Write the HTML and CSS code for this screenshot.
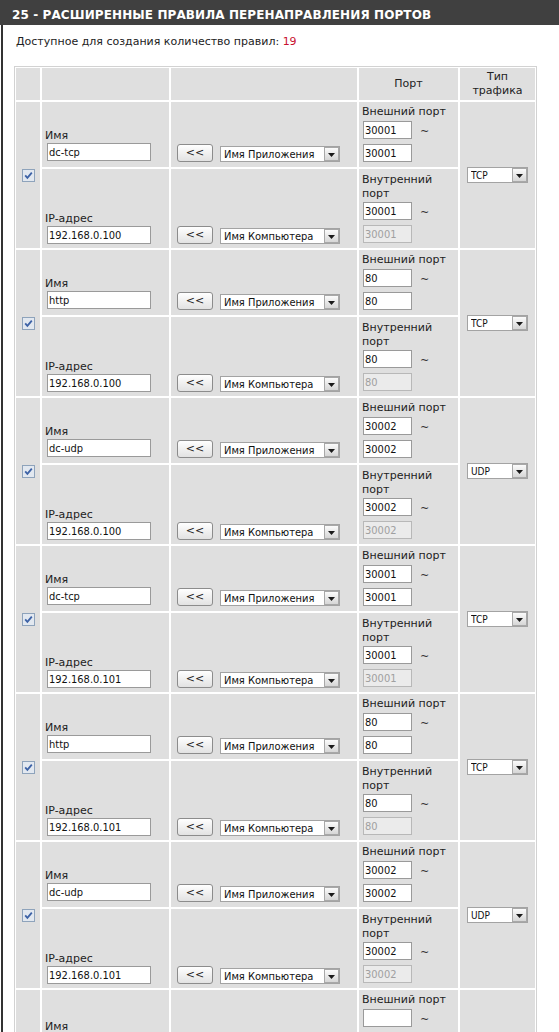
FILE: index.html
```html
<!DOCTYPE html>
<html lang="ru">
<head>
<meta charset="utf-8">
<title>Расширенные правила перенаправления портов</title>
<link rel="stylesheet" href="styles.css">
</head>
<body>
<div class="title">25 - РАСШИРЕННЫЕ ПРАВИЛА ПЕРЕНАПРАВЛЕНИЯ ПОРТОВ</div>
<div class="box">
  <div class="avail">Доступное для создания количество правил: <span class="num">19</span></div>
  <div class="grid">
    <div class="cell"></div>
    <div class="cell"></div>
    <div class="cell"></div>
    <div class="cell hdr">Порт</div>
    <div class="cell hdr">Тип<br>трафика</div>

    <!-- group 1 -->
    <div class="cell chk"><svg class="cb" width="13" height="13" viewBox="0 0 13 13"><rect x="0.5" y="0.5" width="12" height="12" fill="#e2e8f0" stroke="#8ea3bb"/><path d="M3.2 6.3 L5.4 8.8 L9.8 3.6" fill="none" stroke="#3d62a6" stroke-width="1.8"/></svg></div>
    <div class="cell name r1"><span class="lbl">Имя</span><input class="txt nm" type="text" value="dc-tcp"></div>
    <div class="cell act r1"><button class="btn">&lt;&lt;</button><div class="sel wide"><span class="st">Имя Приложения</span><span class="arr"><svg width="7" height="4" viewBox="0 0 7 4"><path d="M0 0H7L3.5 4Z" fill="#1a1a1a"/></svg></span></div></div>
    <div class="cell port r1"><div class="plbl">Внешний порт</div><div class="prow"><input class="txt pn" type="text" value="30001"><span class="tilde">~</span></div><div class="prow"><input class="txt pn" type="text" value="30001"></div></div>
    <div class="cell type"><div class="sel narrow"><span class="st">TCP</span><span class="arr"><svg width="7" height="4" viewBox="0 0 7 4"><path d="M0 0H7L3.5 4Z" fill="#1a1a1a"/></svg></span></div></div>
    <div class="cell name r2"><span class="lbl">IP-адрес</span><input class="txt nm" type="text" value="192.168.0.100"></div>
    <div class="cell act r2"><button class="btn">&lt;&lt;</button><div class="sel wide"><span class="st">Имя Компьютера</span><span class="arr"><svg width="7" height="4" viewBox="0 0 7 4"><path d="M0 0H7L3.5 4Z" fill="#1a1a1a"/></svg></span></div></div>
    <div class="cell port r2"><div class="plbl">Внутренний<br>порт</div><div class="prow"><input class="txt pn" type="text" value="30001"><span class="tilde">~</span></div><div class="prow"><input class="txt pn" type="text" value="30001" disabled></div></div>

    <!-- group 2 -->
    <div class="cell chk"><svg class="cb" width="13" height="13" viewBox="0 0 13 13"><rect x="0.5" y="0.5" width="12" height="12" fill="#e2e8f0" stroke="#8ea3bb"/><path d="M3.2 6.3 L5.4 8.8 L9.8 3.6" fill="none" stroke="#3d62a6" stroke-width="1.8"/></svg></div>
    <div class="cell name r1"><span class="lbl">Имя</span><input class="txt nm" type="text" value="http"></div>
    <div class="cell act r1"><button class="btn">&lt;&lt;</button><div class="sel wide"><span class="st">Имя Приложения</span><span class="arr"><svg width="7" height="4" viewBox="0 0 7 4"><path d="M0 0H7L3.5 4Z" fill="#1a1a1a"/></svg></span></div></div>
    <div class="cell port r1"><div class="plbl">Внешний порт</div><div class="prow"><input class="txt pn" type="text" value="80"><span class="tilde">~</span></div><div class="prow"><input class="txt pn" type="text" value="80"></div></div>
    <div class="cell type"><div class="sel narrow"><span class="st">TCP</span><span class="arr"><svg width="7" height="4" viewBox="0 0 7 4"><path d="M0 0H7L3.5 4Z" fill="#1a1a1a"/></svg></span></div></div>
    <div class="cell name r2"><span class="lbl">IP-адрес</span><input class="txt nm" type="text" value="192.168.0.100"></div>
    <div class="cell act r2"><button class="btn">&lt;&lt;</button><div class="sel wide"><span class="st">Имя Компьютера</span><span class="arr"><svg width="7" height="4" viewBox="0 0 7 4"><path d="M0 0H7L3.5 4Z" fill="#1a1a1a"/></svg></span></div></div>
    <div class="cell port r2"><div class="plbl">Внутренний<br>порт</div><div class="prow"><input class="txt pn" type="text" value="80"><span class="tilde">~</span></div><div class="prow"><input class="txt pn" type="text" value="80" disabled></div></div>

    <!-- group 3 -->
    <div class="cell chk"><svg class="cb" width="13" height="13" viewBox="0 0 13 13"><rect x="0.5" y="0.5" width="12" height="12" fill="#e2e8f0" stroke="#8ea3bb"/><path d="M3.2 6.3 L5.4 8.8 L9.8 3.6" fill="none" stroke="#3d62a6" stroke-width="1.8"/></svg></div>
    <div class="cell name r1"><span class="lbl">Имя</span><input class="txt nm" type="text" value="dc-udp"></div>
    <div class="cell act r1"><button class="btn">&lt;&lt;</button><div class="sel wide"><span class="st">Имя Приложения</span><span class="arr"><svg width="7" height="4" viewBox="0 0 7 4"><path d="M0 0H7L3.5 4Z" fill="#1a1a1a"/></svg></span></div></div>
    <div class="cell port r1"><div class="plbl">Внешний порт</div><div class="prow"><input class="txt pn" type="text" value="30002"><span class="tilde">~</span></div><div class="prow"><input class="txt pn" type="text" value="30002"></div></div>
    <div class="cell type"><div class="sel narrow"><span class="st">UDP</span><span class="arr"><svg width="7" height="4" viewBox="0 0 7 4"><path d="M0 0H7L3.5 4Z" fill="#1a1a1a"/></svg></span></div></div>
    <div class="cell name r2"><span class="lbl">IP-адрес</span><input class="txt nm" type="text" value="192.168.0.100"></div>
    <div class="cell act r2"><button class="btn">&lt;&lt;</button><div class="sel wide"><span class="st">Имя Компьютера</span><span class="arr"><svg width="7" height="4" viewBox="0 0 7 4"><path d="M0 0H7L3.5 4Z" fill="#1a1a1a"/></svg></span></div></div>
    <div class="cell port r2"><div class="plbl">Внутренний<br>порт</div><div class="prow"><input class="txt pn" type="text" value="30002"><span class="tilde">~</span></div><div class="prow"><input class="txt pn" type="text" value="30002" disabled></div></div>

    <!-- group 4 -->
    <div class="cell chk"><svg class="cb" width="13" height="13" viewBox="0 0 13 13"><rect x="0.5" y="0.5" width="12" height="12" fill="#e2e8f0" stroke="#8ea3bb"/><path d="M3.2 6.3 L5.4 8.8 L9.8 3.6" fill="none" stroke="#3d62a6" stroke-width="1.8"/></svg></div>
    <div class="cell name r1"><span class="lbl">Имя</span><input class="txt nm" type="text" value="dc-tcp"></div>
    <div class="cell act r1"><button class="btn">&lt;&lt;</button><div class="sel wide"><span class="st">Имя Приложения</span><span class="arr"><svg width="7" height="4" viewBox="0 0 7 4"><path d="M0 0H7L3.5 4Z" fill="#1a1a1a"/></svg></span></div></div>
    <div class="cell port r1"><div class="plbl">Внешний порт</div><div class="prow"><input class="txt pn" type="text" value="30001"><span class="tilde">~</span></div><div class="prow"><input class="txt pn" type="text" value="30001"></div></div>
    <div class="cell type"><div class="sel narrow"><span class="st">TCP</span><span class="arr"><svg width="7" height="4" viewBox="0 0 7 4"><path d="M0 0H7L3.5 4Z" fill="#1a1a1a"/></svg></span></div></div>
    <div class="cell name r2"><span class="lbl">IP-адрес</span><input class="txt nm" type="text" value="192.168.0.101"></div>
    <div class="cell act r2"><button class="btn">&lt;&lt;</button><div class="sel wide"><span class="st">Имя Компьютера</span><span class="arr"><svg width="7" height="4" viewBox="0 0 7 4"><path d="M0 0H7L3.5 4Z" fill="#1a1a1a"/></svg></span></div></div>
    <div class="cell port r2"><div class="plbl">Внутренний<br>порт</div><div class="prow"><input class="txt pn" type="text" value="30001"><span class="tilde">~</span></div><div class="prow"><input class="txt pn" type="text" value="30001" disabled></div></div>

    <!-- group 5 -->
    <div class="cell chk"><svg class="cb" width="13" height="13" viewBox="0 0 13 13"><rect x="0.5" y="0.5" width="12" height="12" fill="#e2e8f0" stroke="#8ea3bb"/><path d="M3.2 6.3 L5.4 8.8 L9.8 3.6" fill="none" stroke="#3d62a6" stroke-width="1.8"/></svg></div>
    <div class="cell name r1"><span class="lbl">Имя</span><input class="txt nm" type="text" value="http"></div>
    <div class="cell act r1"><button class="btn">&lt;&lt;</button><div class="sel wide"><span class="st">Имя Приложения</span><span class="arr"><svg width="7" height="4" viewBox="0 0 7 4"><path d="M0 0H7L3.5 4Z" fill="#1a1a1a"/></svg></span></div></div>
    <div class="cell port r1"><div class="plbl">Внешний порт</div><div class="prow"><input class="txt pn" type="text" value="80"><span class="tilde">~</span></div><div class="prow"><input class="txt pn" type="text" value="80"></div></div>
    <div class="cell type"><div class="sel narrow"><span class="st">TCP</span><span class="arr"><svg width="7" height="4" viewBox="0 0 7 4"><path d="M0 0H7L3.5 4Z" fill="#1a1a1a"/></svg></span></div></div>
    <div class="cell name r2"><span class="lbl">IP-адрес</span><input class="txt nm" type="text" value="192.168.0.101"></div>
    <div class="cell act r2"><button class="btn">&lt;&lt;</button><div class="sel wide"><span class="st">Имя Компьютера</span><span class="arr"><svg width="7" height="4" viewBox="0 0 7 4"><path d="M0 0H7L3.5 4Z" fill="#1a1a1a"/></svg></span></div></div>
    <div class="cell port r2"><div class="plbl">Внутренний<br>порт</div><div class="prow"><input class="txt pn" type="text" value="80"><span class="tilde">~</span></div><div class="prow"><input class="txt pn" type="text" value="80" disabled></div></div>

    <!-- group 6 -->
    <div class="cell chk"><svg class="cb" width="13" height="13" viewBox="0 0 13 13"><rect x="0.5" y="0.5" width="12" height="12" fill="#e2e8f0" stroke="#8ea3bb"/><path d="M3.2 6.3 L5.4 8.8 L9.8 3.6" fill="none" stroke="#3d62a6" stroke-width="1.8"/></svg></div>
    <div class="cell name r1"><span class="lbl">Имя</span><input class="txt nm" type="text" value="dc-udp"></div>
    <div class="cell act r1"><button class="btn">&lt;&lt;</button><div class="sel wide"><span class="st">Имя Приложения</span><span class="arr"><svg width="7" height="4" viewBox="0 0 7 4"><path d="M0 0H7L3.5 4Z" fill="#1a1a1a"/></svg></span></div></div>
    <div class="cell port r1"><div class="plbl">Внешний порт</div><div class="prow"><input class="txt pn" type="text" value="30002"><span class="tilde">~</span></div><div class="prow"><input class="txt pn" type="text" value="30002"></div></div>
    <div class="cell type"><div class="sel narrow"><span class="st">UDP</span><span class="arr"><svg width="7" height="4" viewBox="0 0 7 4"><path d="M0 0H7L3.5 4Z" fill="#1a1a1a"/></svg></span></div></div>
    <div class="cell name r2"><span class="lbl">IP-адрес</span><input class="txt nm" type="text" value="192.168.0.101"></div>
    <div class="cell act r2"><button class="btn">&lt;&lt;</button><div class="sel wide"><span class="st">Имя Компьютера</span><span class="arr"><svg width="7" height="4" viewBox="0 0 7 4"><path d="M0 0H7L3.5 4Z" fill="#1a1a1a"/></svg></span></div></div>
    <div class="cell port r2"><div class="plbl">Внутренний<br>порт</div><div class="prow"><input class="txt pn" type="text" value="30002"><span class="tilde">~</span></div><div class="prow"><input class="txt pn" type="text" value="30002" disabled></div></div>

    <!-- group 7 -->
    <div class="cell chk"><svg class="cb" width="13" height="13" viewBox="0 0 13 13"><rect x="0.5" y="0.5" width="12" height="12" fill="#f2f4f7" stroke="#8ea3bb"/></svg></div>
    <div class="cell name r1 last"><span class="lbl">Имя</span><input class="txt nm" type="text" value=""></div>
    <div class="cell act r1"><button class="btn">&lt;&lt;</button><div class="sel wide"><span class="st">Имя Приложения</span><span class="arr"><svg width="7" height="4" viewBox="0 0 7 4"><path d="M0 0H7L3.5 4Z" fill="#1a1a1a"/></svg></span></div></div>
    <div class="cell port r1"><div class="plbl">Внешний порт</div><div class="prow"><input class="txt pn" type="text" value=""><span class="tilde">~</span></div><div class="prow"><input class="txt pn" type="text" value=""></div></div>
    <div class="cell type"><div class="sel narrow"><span class="st">TCP</span><span class="arr"><svg width="7" height="4" viewBox="0 0 7 4"><path d="M0 0H7L3.5 4Z" fill="#1a1a1a"/></svg></span></div></div>
    <div class="cell name r2"><span class="lbl">IP-адрес</span><input class="txt nm" type="text" value=""></div>
    <div class="cell act r2"><button class="btn">&lt;&lt;</button><div class="sel wide"><span class="st">Имя Компьютера</span><span class="arr"><svg width="7" height="4" viewBox="0 0 7 4"><path d="M0 0H7L3.5 4Z" fill="#1a1a1a"/></svg></span></div></div>
    <div class="cell port r2"><div class="plbl">Внутренний<br>порт</div><div class="prow"><input class="txt pn" type="text" value=""><span class="tilde">~</span></div><div class="prow"><input class="txt pn" type="text" value="" disabled></div></div>
  </div>
</div>
</body>
</html>
```
FILE: styles.css
```css
body {
  margin: 0;
  background: #fff;
  font-family: "DejaVu Sans", Verdana, sans-serif;
  font-size: 11px;
  color: #222;
}

.title {
  height: 25px;
  box-sizing: border-box;
  padding: 6px 0 0 12px;
  background: #404040;
  color: #fff;
  font-weight: bold;
  font-size: 12px;
  line-height: 19px;
  letter-spacing: 0.1px;
  white-space: nowrap;
}

.box {
  margin-left: 1px;
  border-left: 2px solid #333;
  padding: 10px 0 0 11px;
}

.avail {
  padding-left: 2px;
  line-height: 14px;
  margin-bottom: 17px;
}

.avail .num {
  color: #c8102e;
}

.grid {
  display: grid;
  grid-template-columns: 24px 127px 186px 99px 75px;
  grid-template-rows: 32px;
  grid-auto-rows: 65px 79px;
  gap: 2px;
  padding: 1px;
  border: 1px solid #d2d2d2;
  background: #fff;
  width: max-content;
}

.cell {
  background: #dfdfdf;
  box-sizing: border-box;
}

.hdr {
  display: flex;
  align-items: center;
  justify-content: center;
  text-align: center;
  line-height: 14px;
}

.chk {
  grid-row: span 2;
  display: flex;
  justify-content: center;
  align-items: flex-start;
  padding-top: 67px;
}

.cb {
  display: block;
}

.type {
  grid-row: span 2;
  display: flex;
  align-items: center;
  padding-left: 7px;
}

.name {
  display: flex;
  flex-direction: column;
  justify-content: flex-end;
  align-items: flex-start;
  padding: 0 3px 6px 3px;
}

.name.r2 {
  padding-bottom: 4px;
}

.name.last {
  padding-bottom: 3px;
}

.lbl {
  line-height: 14px;
}

.act {
  display: flex;
  align-items: flex-end;
  gap: 7px;
  padding: 0 0 5px 6px;
}

.act.r2 {
  padding-bottom: 4px;
}

.port {
  display: flex;
  flex-direction: column;
  justify-content: flex-end;
  padding: 0 0 5px 3px;
}

.port.r2 {
  padding-bottom: 5px;
}

.plbl {
  line-height: 14px;
  margin-bottom: 2px;
}

.port.r2 .plbl {
  margin-bottom: 1px;
}

.prow {
  display: flex;
  align-items: center;
  height: 18px;
  padding-left: 1px;
}

.prow + .prow {
  margin-top: 5px;
}

.txt {
  box-sizing: border-box;
  height: 18px;
  margin: 0;
  padding: 0 1px;
  border: 1px solid #9a9a9a;
  background: #fff;
  color: #111;
  font-family: "DejaVu Sans Condensed", "Liberation Sans", sans-serif;
  font-size: 11px;
  outline: none;
}

.txt:disabled {
  background: #ebebeb;
  border-color: #b8b8b8;
  color: #a0a0a0;
}

.nm {
  width: 104px;
  margin-left: 2px;
}

.pn {
  width: 49px;
}

.tilde {
  margin-left: 8px;
  font-size: 11px;
  color: #333;
  position: relative;
  top: 1px;
}

.btn {
  box-sizing: border-box;
  width: 36px;
  height: 18px;
  margin: 0;
  padding: 0;
  border: 1px solid #8c8c8c;
  border-radius: 3px;
  background: linear-gradient(#ffffff, #e2e2e2);
  color: #222;
  font-family: "DejaVu Sans", Verdana, sans-serif;
  font-size: 11px;
  line-height: 16px;
}

.sel {
  box-sizing: border-box;
  display: flex;
  align-items: center;
  height: 16px;
  border: 1px solid #a3a3a3;
  background: #fff;
  padding-left: 3px;
  margin-bottom: 0;
  color: #111;
  font-family: "DejaVu Sans Condensed", "Liberation Sans", sans-serif;
  font-size: 11px;
  white-space: nowrap;
}

.sel.wide {
  width: 120px;
}

.sel.narrow {
  width: 61px;
  font-size: 10px;
}

.st {
  flex: 1;
  overflow: hidden;
}

.arr {
  box-sizing: border-box;
  display: flex;
  align-items: center;
  justify-content: center;
  width: 15px;
  height: 14px;
  margin-right: 0;
  border: 1px solid #a8a8a8;
  background: linear-gradient(#fbfbfb, #d6d6d6);
  padding-top: 2px;
}

.arr svg {
  display: block;
}
```
